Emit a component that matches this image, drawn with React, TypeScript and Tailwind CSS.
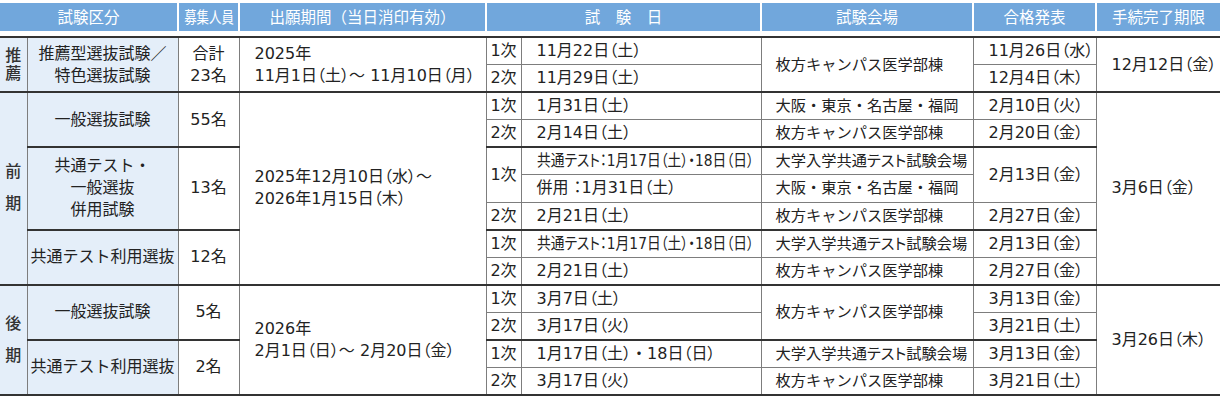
import React from 'react';

const cell = 'border border-[#7d7d7d] p-0 align-middle whitespace-nowrap';
const L = `${cell} pl-[15px] text-left`;
const C = `${cell} text-center`;
const V = `${cell} pl-[14px] text-left text-[15.25px] [font-feature-settings:normal]`;
const blue = 'bg-[#e4eef9]';
const kubun = `${cell} ${blue} text-center [font-feature-settings:normal]`;
const first = `${cell} ${blue} border-l-0 text-center font-medium text-[#333]`;
const last = `${cell} border-r-0 pl-[15px] text-left`;
const rowG = 'h-[27.5px] border-t-2 border-[#333]';
const row = 'h-[27.5px]';

const Squeeze = ({ children }: { children: React.ReactNode }) => (
  <span className="inline-block origin-left scale-x-[0.86]">{children}</span>
);

const Dot = () => <span className="[font-feature-settings:normal]">・</span>;

const headers = [
  { label: '試験区分', w: 'w-[178px] border-r' },
  { label: '募集人員', w: 'w-[61px] border-x', squeeze: true },
  { label: '出願期間（当日消印有効）', w: 'w-[247px] border-x' },
  { label: '試　験　日', w: 'w-[275px] border-x' },
  { label: '試験会場', w: 'w-[212px] border-x' },
  { label: '合格発表', w: 'w-[123px] border-x' },
  { label: '手続完了期限', w: 'w-[124px] border-l' },
];

const Hirakata = '枚方キャンパス医学部棟';
const Cities = '大阪・東京・名古屋・福岡';
const Kyotsu = (
  <>
    大学入学共通<span className="[font-feature-settings:'palt']">テスト</span>試験会場
  </>
);

const VLabel = ({ a, b, gap }: { a: string; b: string; gap: string }) => (
  <div className={`flex flex-col items-center leading-[18px] ${gap}`}>
    <span>{a}</span>
    <span>{b}</span>
  </div>
);

export default function App() {
  return (
    <div className="w-[1220px] bg-white pt-[3px] font-['DejaVu_Sans','Noto_Sans_CJK_JP',sans-serif] text-[#222]">
      {/* header */}
      <div className="flex h-[28px] whitespace-nowrap font-['Noto_Sans_CJK_JP',sans-serif] text-[15.5px] text-white">
        {headers.map((h) => (
          <div key={h.label} className={`${h.w} flex items-center justify-center border-white bg-[#71a7dc]`}>
            {h.squeeze ? <span className="inline-block scale-x-[0.8]">{h.label}</span> : h.label}
          </div>
        ))}
      </div>

      <table className="mt-[5px] w-[1220px] table-fixed border-collapse border-y-2 border-[#333] text-[16px] leading-[22px] [font-feature-settings:'palt']">
        <colgroup>
          <col className="w-[27px]" />
          <col className="w-[151px]" />
          <col className="w-[61px]" />
          <col className="w-[247px]" />
          <col className="w-[35px]" />
          <col className="w-[240px]" />
          <col className="w-[212px]" />
          <col className="w-[123px]" />
          <col className="w-[124px]" />
        </colgroup>
        <tbody>
          {/* 推薦 */}
          <tr className={row}>
            <td rowSpan={2} className={first}>
              <VLabel a="推" b="薦" gap="gap-0" />
            </td>
            <td rowSpan={2} className={kubun}>推薦型選抜試験／<br />特色選抜試験</td>
            <td rowSpan={2} className={C}>合計<br />23名</td>
            <td rowSpan={2} className={L}>2025年<br />11月1日（土）～ 11月10日（月）</td>
            <td className={C}>1次</td>
            <td className={L}>11月22日（土）</td>
            <td rowSpan={2} className={V}>{Hirakata}</td>
            <td className={L}>11月26日（水）</td>
            <td rowSpan={2} className={last}>12月12日（金）</td>
          </tr>
          <tr className={row}>
            <td className={C}>2次</td>
            <td className={L}>11月29日（土）</td>
            <td className={L}>12月4日（木）</td>
          </tr>

          {/* 前期 */}
          <tr className={rowG}>
            <td rowSpan={7} className={first}>
              <VLabel a="前" b="期" gap="gap-[14px]" />
            </td>
            <td rowSpan={2} className={kubun}>一般選抜試験</td>
            <td rowSpan={2} className={C}>55名</td>
            <td rowSpan={7} className={L}>2025年12月10日（水）～<br />2026年1月15日（木）</td>
            <td className={C}>1次</td>
            <td className={L}>1月31日（土）</td>
            <td className={V}>{Cities}</td>
            <td className={L}>2月10日（火）</td>
            <td rowSpan={7} className={last}>3月6日（金）</td>
          </tr>
          <tr className={row}>
            <td className={C}>2次</td>
            <td className={L}>2月14日（土）</td>
            <td className={V}>{Hirakata}</td>
            <td className={L}>2月20日（金）</td>
          </tr>
          <tr className={rowG}>
            <td rowSpan={3} className={kubun}>共通テスト・<br />一般選抜<br />併用試験</td>
            <td rowSpan={3} className={C}>13名</td>
            <td rowSpan={2} className={C}>1次</td>
            <td className={L}><Squeeze>共通テスト：1月17日（土）・18日（日）</Squeeze></td>
            <td className={V}>{Kyotsu}</td>
            <td rowSpan={2} className={L}>2月13日（金）</td>
          </tr>
          <tr className={row}>
            <td className={L}>併用 ：1月31日（土）</td>
            <td className={V}>{Cities}</td>
          </tr>
          <tr className={row}>
            <td className={C}>2次</td>
            <td className={L}>2月21日（土）</td>
            <td className={V}>{Hirakata}</td>
            <td className={L}>2月27日（金）</td>
          </tr>
          <tr className={rowG}>
            <td rowSpan={2} className={kubun}>共通テスト利用選抜</td>
            <td rowSpan={2} className={C}>12名</td>
            <td className={C}>1次</td>
            <td className={L}><Squeeze>共通テスト：1月17日（土）・18日（日）</Squeeze></td>
            <td className={V}>{Kyotsu}</td>
            <td className={L}>2月13日（金）</td>
          </tr>
          <tr className={row}>
            <td className={C}>2次</td>
            <td className={L}>2月21日（土）</td>
            <td className={V}>{Hirakata}</td>
            <td className={L}>2月27日（金）</td>
          </tr>

          {/* 後期 */}
          <tr className={rowG}>
            <td rowSpan={4} className={first}>
              <VLabel a="後" b="期" gap="gap-[14px]" />
            </td>
            <td rowSpan={2} className={kubun}>一般選抜試験</td>
            <td rowSpan={2} className={C}>5名</td>
            <td rowSpan={4} className={L}>2026年<br />2月1日（日）～ 2月20日（金）</td>
            <td className={C}>1次</td>
            <td className={L}>3月7日（土）</td>
            <td rowSpan={2} className={V}>{Hirakata}</td>
            <td className={L}>3月13日（金）</td>
            <td rowSpan={4} className={last}>3月26日（木）</td>
          </tr>
          <tr className={row}>
            <td className={C}>2次</td>
            <td className={L}>3月17日（火）</td>
            <td className={L}>3月21日（土）</td>
          </tr>
          <tr className={rowG}>
            <td rowSpan={2} className={kubun}>共通テスト利用選抜</td>
            <td rowSpan={2} className={C}>2名</td>
            <td className={C}>1次</td>
            <td className={L}>1月17日（土）<Dot />18日（日）</td>
            <td className={V}>{Kyotsu}</td>
            <td className={L}>3月13日（金）</td>
          </tr>
          <tr className={row}>
            <td className={C}>2次</td>
            <td className={L}>3月17日（火）</td>
            <td className={V}>{Hirakata}</td>
            <td className={L}>3月21日（土）</td>
          </tr>
        </tbody>
      </table>
    </div>
  );
}
